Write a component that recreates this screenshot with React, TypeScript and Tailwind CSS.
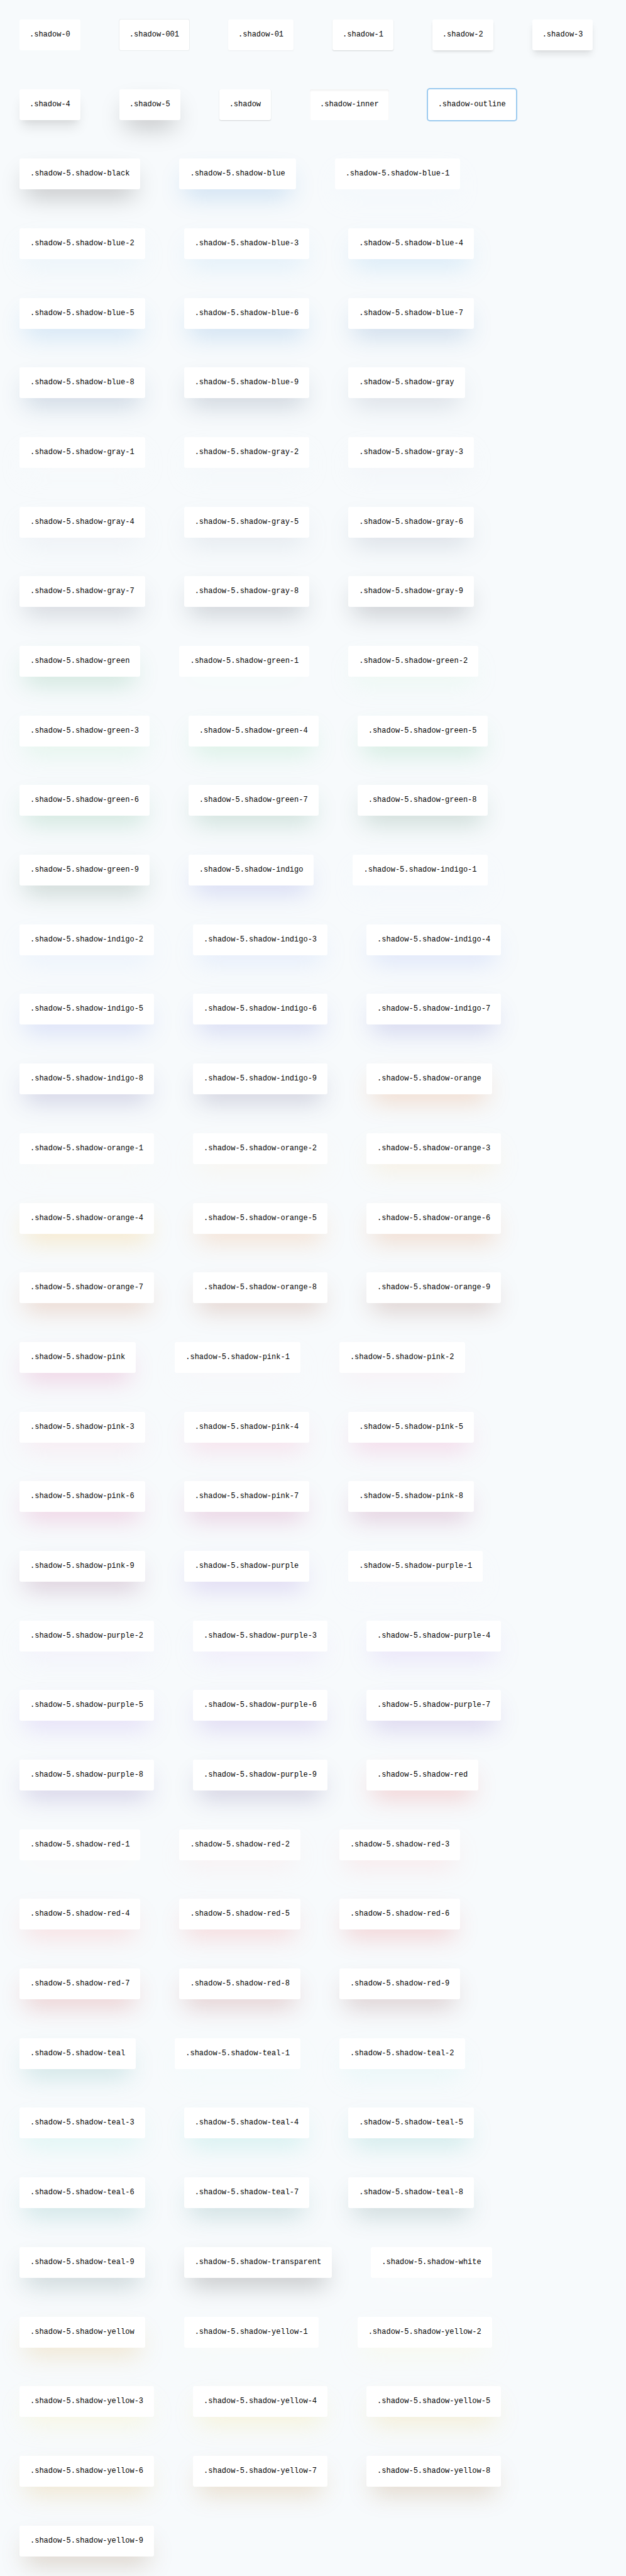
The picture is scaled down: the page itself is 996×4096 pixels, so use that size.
type Swatch = { name: string; shadow: string };

const baseShadows: Swatch[] = [
  { name: '.shadow-0', shadow: 'shadow-none' },
  { name: '.shadow-001', shadow: 'shadow-[0_0_0_1px_rgba(0,0,0,0.05)]' },
  { name: '.shadow-01', shadow: 'shadow-[0_1px_2px_0_rgba(0,0,0,0.05)]' },
  { name: '.shadow-1', shadow: 'shadow-[0_1px_2px_0_rgba(0,0,0,0.1),0_1px_2px_0_rgba(0,0,0,0.06)]' },
  { name: '.shadow-2', shadow: 'shadow-[0_3px_5px_-1px_rgba(0,0,0,0.1),0_2px_3px_-1px_rgba(0,0,0,0.06)]' },
  { name: '.shadow-3', shadow: 'shadow-[0_8px_12px_-2px_rgba(0,0,0,0.1),0_3px_5px_-2px_rgba(0,0,0,0.05)]' },
  { name: '.shadow-4', shadow: 'shadow-[0_15px_19px_-4px_rgba(0,0,0,0.1),0_8px_8px_-4px_rgba(0,0,0,0.04)]' },
  { name: '.shadow-5', shadow: 'shadow-[0_19px_38px_-9px_rgba(0,0,0,0.25)]' },
  { name: '.shadow', shadow: 'shadow-[0_1px_2px_0_rgba(0,0,0,0.1),0_1px_2px_0_rgba(0,0,0,0.06)]' },
  { name: '.shadow-inner', shadow: 'shadow-[inset_0_2px_3px_0_rgba(0,0,0,0.06)]' },
  { name: '.shadow-outline', shadow: 'shadow-[0_0_0_2px_rgba(66,153,225,0.5)]' },
];

const tints: [string, string][] = [
  ['black', 'shadow-[#00000040]'],
  ['blue', 'shadow-[#3182ce40]'],
  ['blue-1', 'shadow-[#ebf8ff40]'],
  ['blue-2', 'shadow-[#bee3f840]'],
  ['blue-3', 'shadow-[#90cdf440]'],
  ['blue-4', 'shadow-[#63b3ed40]'],
  ['blue-5', 'shadow-[#4299e140]'],
  ['blue-6', 'shadow-[#3182ce40]'],
  ['blue-7', 'shadow-[#2b6cb040]'],
  ['blue-8', 'shadow-[#2c528240]'],
  ['blue-9', 'shadow-[#2a436540]'],
  ['gray', 'shadow-[#71809640]'],
  ['gray-1', 'shadow-[#f7fafc40]'],
  ['gray-2', 'shadow-[#edf2f740]'],
  ['gray-3', 'shadow-[#e2e8f040]'],
  ['gray-4', 'shadow-[#cbd5e040]'],
  ['gray-5', 'shadow-[#a0aec040]'],
  ['gray-6', 'shadow-[#71809640]'],
  ['gray-7', 'shadow-[#4a556840]'],
  ['gray-8', 'shadow-[#2d374840]'],
  ['gray-9', 'shadow-[#1a202c40]'],
  ['green', 'shadow-[#38a16940]'],
  ['green-1', 'shadow-[#f0fff440]'],
  ['green-2', 'shadow-[#c6f6d540]'],
  ['green-3', 'shadow-[#9ae6b440]'],
  ['green-4', 'shadow-[#68d39140]'],
  ['green-5', 'shadow-[#48bb7840]'],
  ['green-6', 'shadow-[#38a16940]'],
  ['green-7', 'shadow-[#2f855a40]'],
  ['green-8', 'shadow-[#27674940]'],
  ['green-9', 'shadow-[#22543d40]'],
  ['indigo', 'shadow-[#5a67d840]'],
  ['indigo-1', 'shadow-[#ebf4ff40]'],
  ['indigo-2', 'shadow-[#c3dafe40]'],
  ['indigo-3', 'shadow-[#a3bffa40]'],
  ['indigo-4', 'shadow-[#7f9cf540]'],
  ['indigo-5', 'shadow-[#667eea40]'],
  ['indigo-6', 'shadow-[#5a67d840]'],
  ['indigo-7', 'shadow-[#4c51bf40]'],
  ['indigo-8', 'shadow-[#43419040]'],
  ['indigo-9', 'shadow-[#3c366b40]'],
  ['orange', 'shadow-[#dd6b2040]'],
  ['orange-1', 'shadow-[#fffaf040]'],
  ['orange-2', 'shadow-[#feebc840]'],
  ['orange-3', 'shadow-[#fbd38d40]'],
  ['orange-4', 'shadow-[#f6ad1540]'],
  ['orange-5', 'shadow-[#ed893640]'],
  ['orange-6', 'shadow-[#dd6b2040]'],
  ['orange-7', 'shadow-[#c0562140]'],
  ['orange-8', 'shadow-[#9c422140]'],
  ['orange-9', 'shadow-[#7b341e40]'],
  ['pink', 'shadow-[#d53f8c40]'],
  ['pink-1', 'shadow-[#fff5f740]'],
  ['pink-2', 'shadow-[#fed7e240]'],
  ['pink-3', 'shadow-[#fbb6ce40]'],
  ['pink-4', 'shadow-[#f687b340]'],
  ['pink-5', 'shadow-[#ed64a640]'],
  ['pink-6', 'shadow-[#d53f8c40]'],
  ['pink-7', 'shadow-[#b8328040]'],
  ['pink-8', 'shadow-[#97266d40]'],
  ['pink-9', 'shadow-[#70245940]'],
  ['purple', 'shadow-[#805ad540]'],
  ['purple-1', 'shadow-[#faf5ff40]'],
  ['purple-2', 'shadow-[#e9d8fd40]'],
  ['purple-3', 'shadow-[#d6bcfa40]'],
  ['purple-4', 'shadow-[#b794f440]'],
  ['purple-5', 'shadow-[#9f7aea40]'],
  ['purple-6', 'shadow-[#805ad540]'],
  ['purple-7', 'shadow-[#6b46c140]'],
  ['purple-8', 'shadow-[#553c9a40]'],
  ['purple-9', 'shadow-[#44337a40]'],
  ['red', 'shadow-[#e53e3e40]'],
  ['red-1', 'shadow-[#fff5f540]'],
  ['red-2', 'shadow-[#fed7d740]'],
  ['red-3', 'shadow-[#feb2b240]'],
  ['red-4', 'shadow-[#fc818140]'],
  ['red-5', 'shadow-[#f5656540]'],
  ['red-6', 'shadow-[#e53e3e40]'],
  ['red-7', 'shadow-[#c5303040]'],
  ['red-8', 'shadow-[#9b2c2c40]'],
  ['red-9', 'shadow-[#742a2a40]'],
  ['teal', 'shadow-[#31979540]'],
  ['teal-1', 'shadow-[#e6fffa40]'],
  ['teal-2', 'shadow-[#b2f5ea40]'],
  ['teal-3', 'shadow-[#81e6d940]'],
  ['teal-4', 'shadow-[#4fd1c540]'],
  ['teal-5', 'shadow-[#38b2ac40]'],
  ['teal-6', 'shadow-[#31979540]'],
  ['teal-7', 'shadow-[#2c7a7b40]'],
  ['teal-8', 'shadow-[#285e6140]'],
  ['teal-9', 'shadow-[#234e5240]'],
  ['transparent', 'shadow-[#00000040]'],
  ['white', 'shadow-[#ffffff40]'],
  ['yellow', 'shadow-[#d69e2e40]'],
  ['yellow-1', 'shadow-[#fffff040]'],
  ['yellow-2', 'shadow-[#fefcbf40]'],
  ['yellow-3', 'shadow-[#faf08940]'],
  ['yellow-4', 'shadow-[#f6e05e40]'],
  ['yellow-5', 'shadow-[#ecc94b40]'],
  ['yellow-6', 'shadow-[#d69e2e40]'],
  ['yellow-7', 'shadow-[#b7791f40]'],
  ['yellow-8', 'shadow-[#975a1640]'],
  ['yellow-9', 'shadow-[#74421040]'],
];

const card = 'rounded-[3px] bg-white py-[15px] leading-[19px] whitespace-nowrap';

export default function App() {
  return (
    <ul className="flex min-h-screen flex-wrap content-stretch items-center gap-x-[62px] bg-[#f7fafc] px-[31px] font-['Liberation_Mono',monospace] text-[12px] text-black">
      {baseShadows.map(({ name, shadow }) => (
        <li key={name} className={`${card} px-4 ${shadow}`}>
          {name}
        </li>
      ))}
      {tints.map(([tint, color]) => (
        <li key={tint} className={`${card} px-[17px] shadow-[0_19px_38px_-9px] ${color}`}>
          .shadow-5.shadow-{tint}
        </li>
      ))}
    </ul>
  );
}
